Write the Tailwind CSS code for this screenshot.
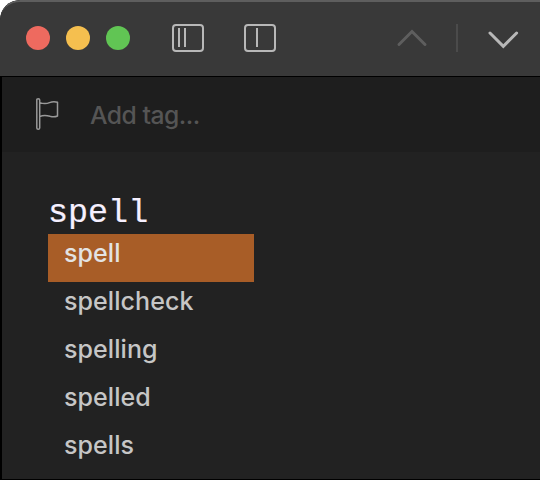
<!DOCTYPE html>
<html lang="en">
<head>
<meta charset="utf-8">
<title>Editor</title>
<script src="https://cdn.jsdelivr.net/npm/@tailwindcss/browser@4"></script>
</head>
<body class="bg-white overflow-hidden">
<div class="w-[540px] h-[480px] flex flex-col bg-black rounded-tl-[20px] overflow-hidden font-['Inter',sans-serif]">
  <header class="h-[76px] shrink-0 flex items-start bg-[#393939] border-t-2 border-[#5e5e5e] rounded-tl-[20px]">
    <div class="flex gap-4 pl-[26px] pt-6">
      <span class="size-6 rounded-full bg-[#ee6a5f]"></span>
      <span class="size-6 rounded-full bg-[#f5bf4f]"></span>
      <span class="size-6 rounded-full bg-[#61c554]"></span>
    </div>
    <div class="flex gap-10 pl-[42px] pt-[22px]">
      <svg class="w-8 h-7" viewBox="0 0 32 28" fill="none" stroke="#b8b8b8" stroke-width="2"><rect x="1" y="1" width="30" height="26" rx="3"/><path d="M7 4v19M13 4v19"/></svg>
      <svg class="w-8 h-7" viewBox="0 0 32 28" fill="none" stroke="#b8b8b8" stroke-width="2"><rect x="1" y="1" width="30" height="26" rx="3"/><path d="M13 4v19"/></svg>
    </div>
    <div class="flex pl-[120px] pt-[22px]">
      <svg class="w-8 h-7" viewBox="0 0 32 28" fill="none" stroke="#5e5e5e" stroke-width="3" stroke-linecap="round"><path d="M3 20.5L16 7.5L29 20.5"/></svg>
      <span class="w-0.5 h-7 ml-7 bg-[#4b4b4b]"></span>
      <svg class="w-8 h-7 ml-[29px]" viewBox="0 0 32 28" fill="none" stroke="#b8b8b8" stroke-width="3" stroke-linecap="round"><path d="M3 9L16.3 22.3L29.6 9"/></svg>
    </div>
  </header>
  <div class="ml-0.5 mt-px h-[75px] shrink-0 flex items-center bg-[#1e1e1e]">
    <svg class="w-6 h-8 ml-[34px] -mt-px" viewBox="0 0 24 32" fill="none" stroke="#999" stroke-width="1.5" stroke-linejoin="round"><path d="M3.7 4.6V2Q3.7 .8 2.2 .8T.8 2V30Q.8 31.2 2.2 31.2T3.7 30V18.6C8 16.4 11 17.3 14 18.3C17 19.2 20 18.7 21.5 18V4.3C19 3.4 16.5 3.4 13.5 4.6C10.5 6 7 5.8 3.7 4.6V18.6"/></svg>
    <span class="ml-[30px] mt-px text-[24.7px] leading-8 font-medium tracking-[-0.5px] text-[#555]">Add tag...</span>
  </div>
  <main class="ml-0.5 flex-1 mb-px pl-[46px] pt-[38px] bg-[#222]">
    <div class="h-11 pt-px text-[33.4px] leading-[44px] text-[#f6f0ff] font-['Liberation_Mono',monospace] [-webkit-text-stroke:0.2px_#f6f0ff]">spell</div>
    <ul class="w-[206px] text-[25px] leading-[38px] font-medium tracking-[0.07px] text-[#c6c6c6]">
      <li class="h-12 pl-4 bg-[#a85d27] text-[#e3e3e3]">spell</li>
      <li class="h-12 pl-4">spellcheck</li>
      <li class="h-12 pl-4">spelling</li>
      <li class="h-12 pl-4">spelled</li>
      <li class="h-12 pl-4">spells</li>
    </ul>
  </main>
</div>
</body>
</html>
